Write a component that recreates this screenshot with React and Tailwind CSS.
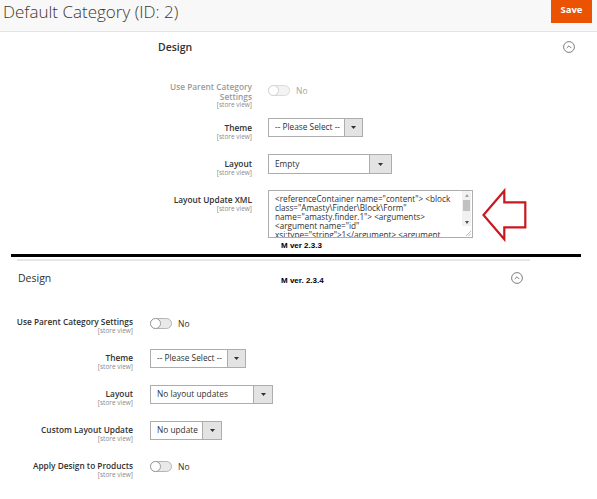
import React from "react";

function Chevron() {
  return (
    <svg width="12" height="12" viewBox="0 0 12 12" fill="none" stroke="#707070" strokeWidth="0.9">
      <circle cx="6" cy="6" r="5.4" />
      <polyline points="3.7,7.1 6,4.8 8.3,7.1" />
    </svg>
  );
}

function Toggle({ disabled }) {
  return (
    <div
      className={`w-[22px] h-[11px] rounded-full border flex items-center ${
        disabled ? "border-[#dadada] bg-[#f3f3f3]" : "border-[#b5b5b5] bg-[#e9e9e9]"
      }`}
    >
      <div
        className={`w-[11px] h-[11px] -ml-px rounded-full bg-white border ${
          disabled ? "border-[#d2d2d2]" : "border-[#9a9a9a]"
        }`}
      />
    </div>
  );
}

function Select({ className, arrowClass, text }) {
  return (
    <div className={`flex border border-[#adadad] bg-white ${className}`}>
      <div className="flex-1 flex items-center pl-[6px] text-[8.3px] whitespace-nowrap overflow-hidden">
        {text}
      </div>
      <div className={`${arrowClass} border-l border-[#adadad] bg-[#e3e3e3] flex items-center justify-center`}>
        <svg width="5" height="3" viewBox="0 0 5 3">
          <polygon points="0,0 5,0 2.5,3" fill="#303030" />
        </svg>
      </div>
    </div>
  );
}

function Label({ children, disabled }) {
  return (
    <div className="pt-[4.5px]">
      <div className={`text-[8.3px] leading-[10px] font-semibold whitespace-nowrap ${disabled ? "text-[#9a9a9a]" : "text-[#303030]"}`}>
        {children}
      </div>
      <div className="text-[6.5px] leading-[8px] text-[#8a8a8a]">[store view]</div>
    </div>
  );
}

export default function App() {
  const xml = [
    '<referenceContainer name="content"> <block',
    'class="Amasty\\Finder\\Block\\Form"',
    'name="amasty.finder.1"> <arguments>',
    '<argument name="id"',
    'xsi:type="string">1</argument> <argument',
  ];
  return (
    <div className="w-[597px] h-[499px] bg-white overflow-hidden font-['Open_Sans',sans-serif] text-[#303030]">
      {/* Header */}
      <div className="h-[32px] bg-[#f8f8f8] border-b border-[#e3e3e3] flex justify-between items-start">
        <div className="pl-[3px] pt-[1.5px] text-[17px] leading-[20px] font-light text-[#41362f] whitespace-nowrap">
          Default Category (ID: 2)
        </div>
        <div className="mr-[5px] w-[41px] h-[23px] bg-[#eb5202] text-white font-bold text-[9.5px] flex items-center justify-center pb-[2px]">
          Save
        </div>
      </div>

      {/* Upper section (2.3.3) */}
      <div className="pt-[8px] flex items-center h-[14px] box-content">
        <div className="pl-[158px] text-[10.5px] leading-[14px] font-semibold text-[#303030]">Design</div>
        <div className="ml-auto mr-[22px] flex">
          <Chevron />
        </div>
      </div>

      <div className="mt-[28px] flex items-start h-[36px]">
        <div className="w-[252px] text-right">
          <div className="text-[8.3px] leading-[9.5px] font-semibold text-[#9a9a9a]">
            Use Parent Category
            <br />
            Settings
          </div>
          <div className="text-[6.5px] leading-[8px] text-[#8a8a8a]">[store view]</div>
        </div>
        <div className="ml-[16px] mt-[3px] flex items-center gap-[6px]">
          <Toggle disabled />
          <span className="text-[8.5px] leading-[11px] text-[#a3a3a3]">No</span>
        </div>
      </div>

      <div className="flex items-start h-[36px]">
        <div className="w-[252px] text-right">
          <Label>Theme</Label>
        </div>
        <div className="ml-[16px]">
          <Select className="w-[95px] h-[19px]" arrowClass="w-[18px]" text="-- Please Select --" />
        </div>
      </div>

      <div className="flex items-start h-[36px]">
        <div className="w-[252px] text-right">
          <Label>Layout</Label>
        </div>
        <div className="ml-[16px]">
          <Select className="w-[124px] h-[20px]" arrowClass="w-[22px]" text="Empty" />
        </div>
      </div>

      <div className="flex items-start h-[50px]">
        <div className="w-[252px] text-right">
          <Label>Layout Update XML</Label>
        </div>
        <div className="ml-[16px] w-[205px] h-[48px] border border-[#adadad] bg-white flex overflow-hidden">
          <div className="flex-1 pl-[6px] pt-[2.5px] text-[8.2px] leading-[9px] text-[#303030] overflow-hidden">
            {xml.map((l, i) => (
              <div key={i} className="whitespace-nowrap">
                {l}
              </div>
            ))}
          </div>
          <div className="w-[9px] mr-px flex flex-col">
            <div className="h-[8px] bg-[#f1f1f1] flex items-center justify-center">
              <svg width="4" height="3" viewBox="0 0 4 3">
                <polygon points="0,3 4,3 2,0" fill="#a3a3a3" />
              </svg>
            </div>
            <div className="h-[12px] bg-[#f1f1f1] px-[1px] pt-px">
              <div className="h-[11px] bg-[#c1c1c1]" />
            </div>
            <div className="h-[7px] bg-[#f1f1f1]" />
            <div className="h-[8px] bg-[#f1f1f1] flex items-center justify-center">
              <svg width="4" height="3" viewBox="0 0 4 3">
                <polygon points="0,0 4,0 2,3" fill="#505050" />
              </svg>
            </div>
            <div className="flex-1 flex items-end justify-end pb-px">
              <svg width="6" height="6" viewBox="0 0 6 6" stroke="#9a9a9a" strokeWidth="0.7">
                <line x1="1" y1="6" x2="6" y2="1" />
                <line x1="3.5" y1="6" x2="6" y2="3.5" />
              </svg>
            </div>
          </div>
        </div>
        <svg width="44" height="50" viewBox="0 0 44 50" className="ml-[10px] overflow-visible" fill="none">
          <polygon
            points="0.5,25 21.3,0.8 21.3,12.3 42.3,12.3 42.3,37.3 21.3,37.3 21.3,49.2"
            stroke="#c9181f"
            strokeWidth="2.2"
            strokeLinejoin="miter"
          />
        </svg>
      </div>

      <div className="mt-[1px] pl-[281px] font-['Liberation_Sans',Arial,sans-serif] font-bold text-[8px] leading-[9px] text-black">
        M ver 2.3.3
      </div>
      <div className="mt-[4px] ml-[11px] w-[570px] h-[3px] bg-black" />
      <div className="mt-[2px] ml-[17px] w-[513px] h-[2px] bg-[#e6e6e6]" />

      {/* Lower section (2.3.4) */}
      <div className="mt-[10px] flex items-start h-[14px]">
        <div className="ml-[18px] w-[263px] text-[10.5px] leading-[14px] text-[#303030]">Design</div>
        <div className="w-[230px] mt-[5px] font-['Liberation_Sans',Arial,sans-serif] font-bold text-[8px] leading-[9px] text-black">
          M ver. 2.3.4
        </div>
        <div className="mt-[1px] flex">
          <Chevron />
        </div>
      </div>

      <div className="mt-[27.5px] flex items-start h-[36px]">
        <div className="w-[133px] text-right">
          <Label>Use Parent Category Settings</Label>
        </div>
        <div className="ml-[17px] mt-[5.5px] flex items-center gap-[6px]">
          <Toggle />
          <span className="text-[8.5px] leading-[11px] text-[#303030]">No</span>
        </div>
      </div>

      <div className="flex items-start h-[36px]">
        <div className="w-[133px] text-right">
          <Label>Theme</Label>
        </div>
        <div className="ml-[17px]">
          <Select className="w-[96px] h-[19px]" arrowClass="w-[18px]" text="-- Please Select --" />
        </div>
      </div>

      <div className="flex items-start h-[36px]">
        <div className="w-[133px] text-right">
          <Label>Layout</Label>
        </div>
        <div className="ml-[17px]">
          <Select className="w-[123px] h-[19px]" arrowClass="w-[19px]" text="No layout updates" />
        </div>
      </div>

      <div className="flex items-start h-[36px]">
        <div className="w-[133px] text-right">
          <Label>Custom Layout Update</Label>
        </div>
        <div className="ml-[17px]">
          <Select className="w-[72px] h-[19px]" arrowClass="w-[19px]" text="No update" />
        </div>
      </div>

      <div className="flex items-start h-[36px]">
        <div className="w-[133px] text-right">
          <Label>Apply Design to Products</Label>
        </div>
        <div className="ml-[17px] mt-[4.5px] flex items-center gap-[6px]">
          <Toggle />
          <span className="text-[8.5px] leading-[11px] text-[#303030]">No</span>
        </div>
      </div>
    </div>
  );
}
